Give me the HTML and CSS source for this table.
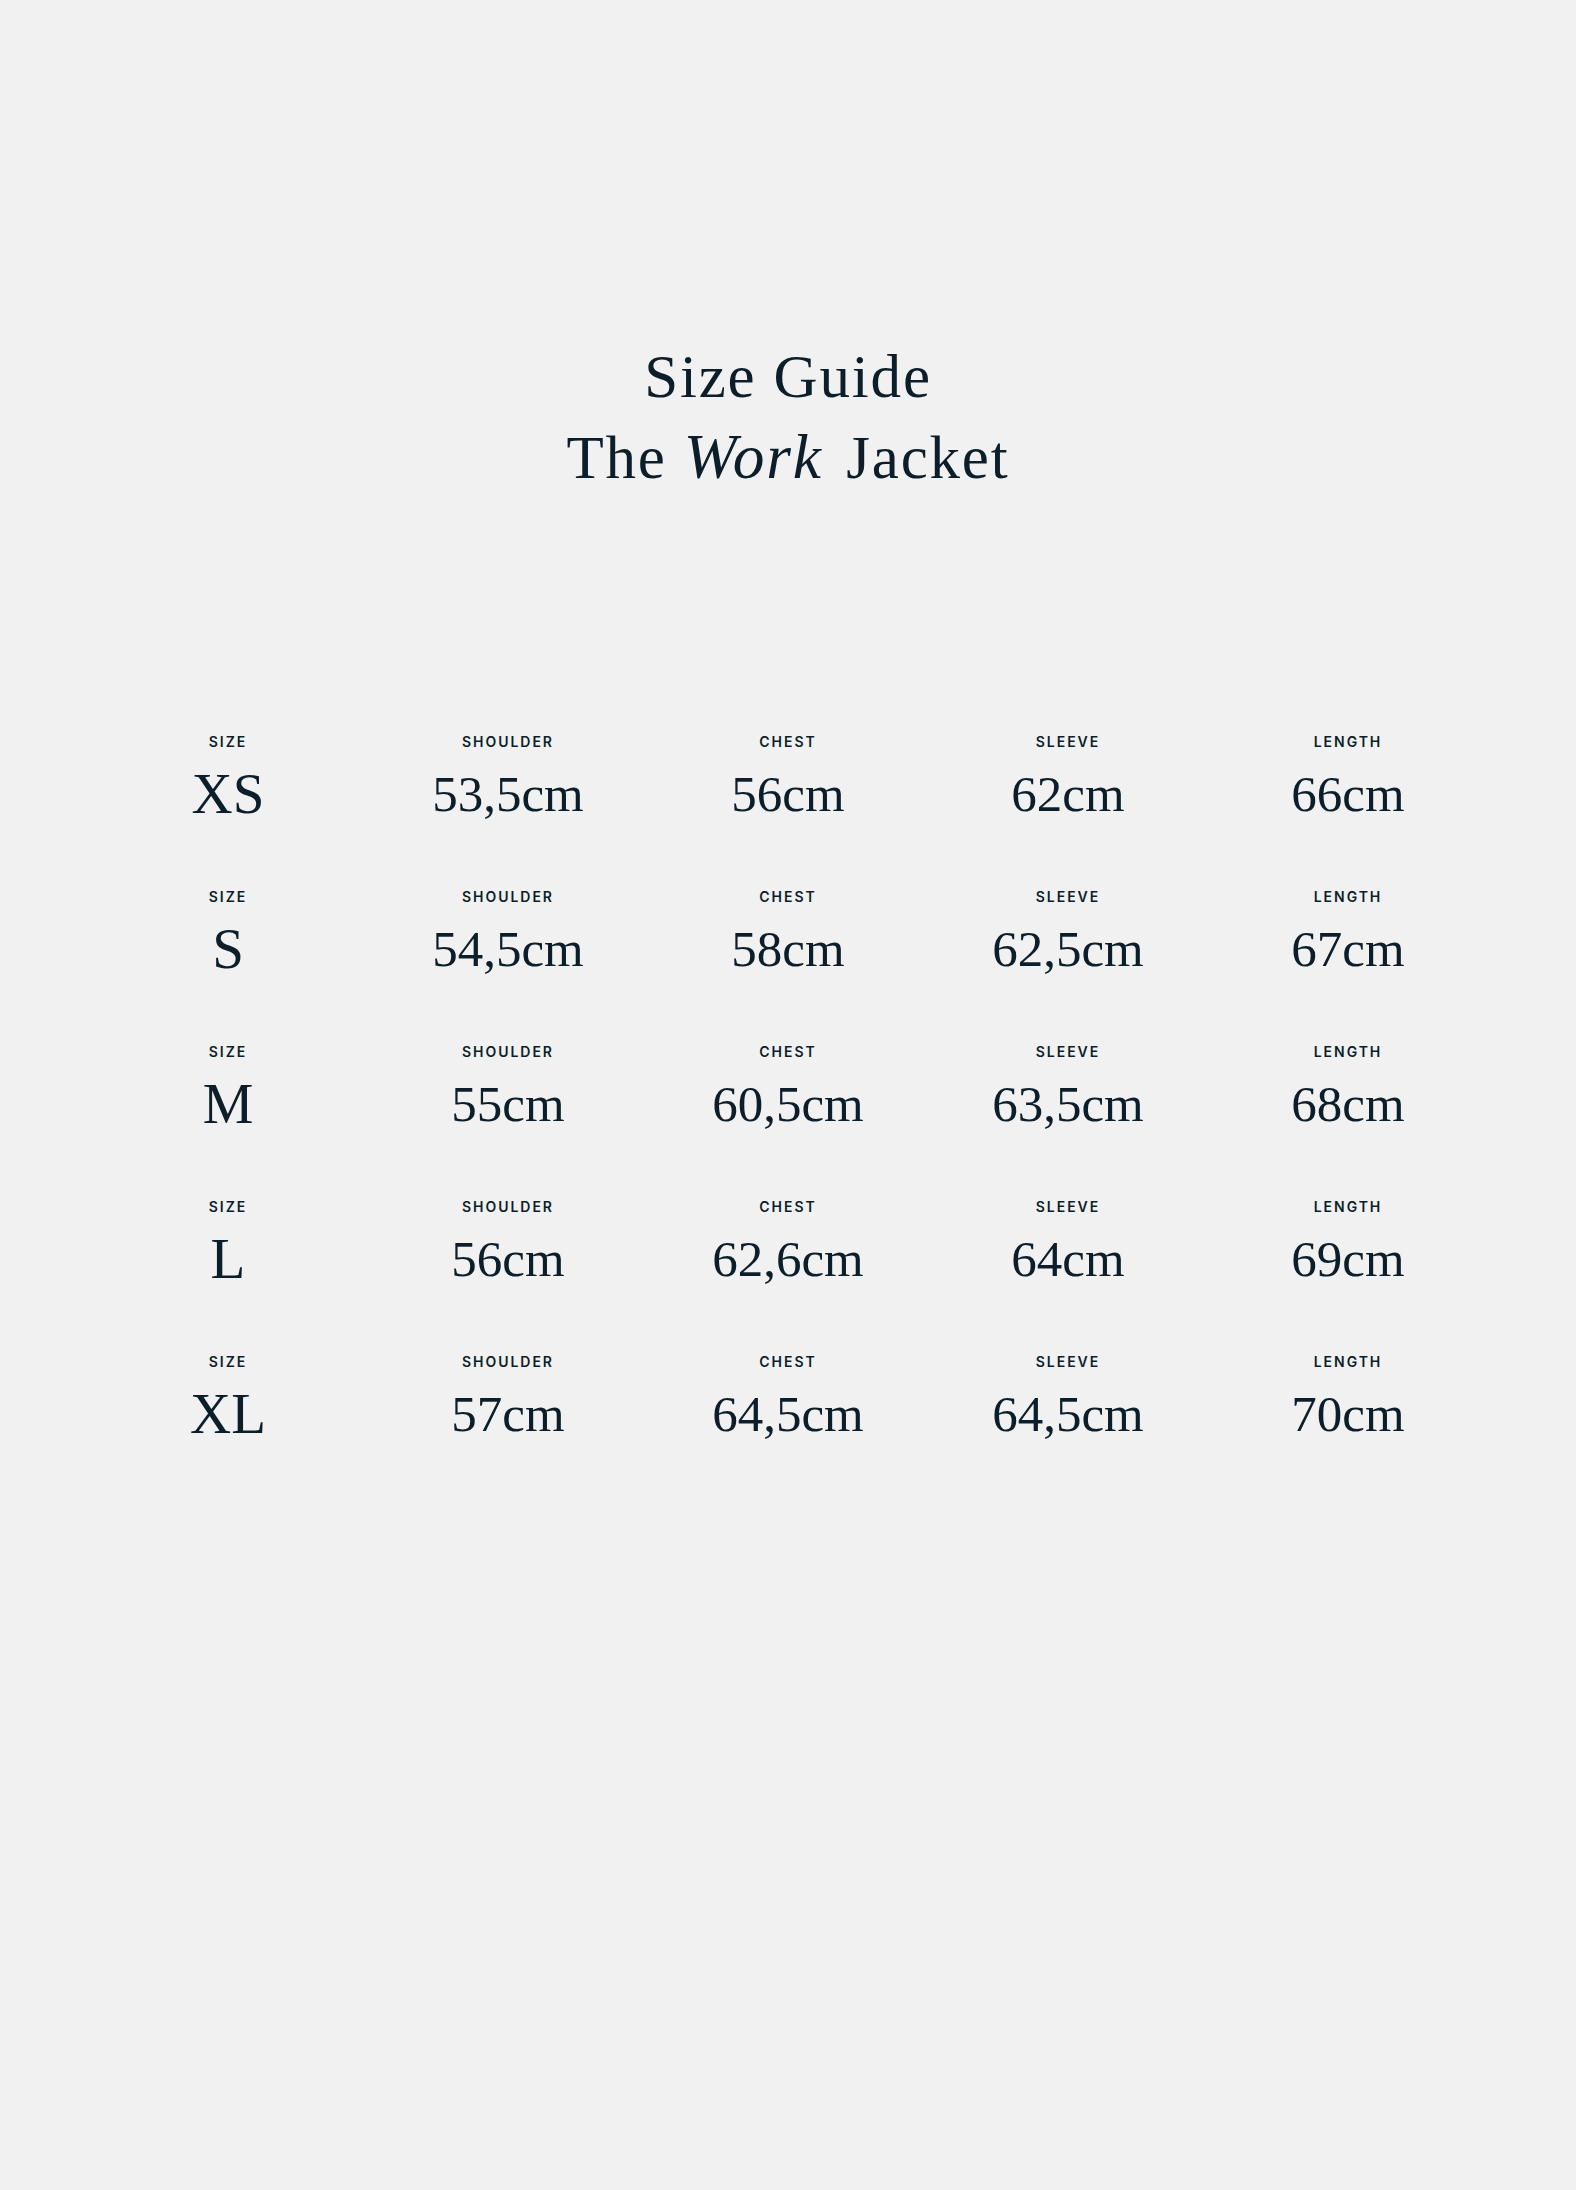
FILE: index.html
```html
<!DOCTYPE html>
<html lang="en">
<head>
<meta charset="utf-8">
<title>Size Guide – The Work Jacket</title>
<link rel="stylesheet" href="styles.css">
</head>
<body>
<main class="page">
  <header class="title">
    <h1 class="title-line">Size Guide</h1>
    <p class="title-line">The <em>Work</em> Jacket</p>
  </header>
  <section class="table">
    <div class="row">
      <div class="cell"><span class="label">Size</span><span class="value value-size">XS</span></div>
      <div class="cell"><span class="label">Shoulder</span><span class="value">53,5cm</span></div>
      <div class="cell"><span class="label">Chest</span><span class="value">56cm</span></div>
      <div class="cell"><span class="label">Sleeve</span><span class="value">62cm</span></div>
      <div class="cell"><span class="label">Length</span><span class="value">66cm</span></div>
    </div>
    <div class="row">
      <div class="cell"><span class="label">Size</span><span class="value value-size">S</span></div>
      <div class="cell"><span class="label">Shoulder</span><span class="value">54,5cm</span></div>
      <div class="cell"><span class="label">Chest</span><span class="value">58cm</span></div>
      <div class="cell"><span class="label">Sleeve</span><span class="value">62,5cm</span></div>
      <div class="cell"><span class="label">Length</span><span class="value">67cm</span></div>
    </div>
    <div class="row">
      <div class="cell"><span class="label">Size</span><span class="value value-size">M</span></div>
      <div class="cell"><span class="label">Shoulder</span><span class="value">55cm</span></div>
      <div class="cell"><span class="label">Chest</span><span class="value">60,5cm</span></div>
      <div class="cell"><span class="label">Sleeve</span><span class="value">63,5cm</span></div>
      <div class="cell"><span class="label">Length</span><span class="value">68cm</span></div>
    </div>
    <div class="row">
      <div class="cell"><span class="label">Size</span><span class="value value-size">L</span></div>
      <div class="cell"><span class="label">Shoulder</span><span class="value">56cm</span></div>
      <div class="cell"><span class="label">Chest</span><span class="value">62,6cm</span></div>
      <div class="cell"><span class="label">Sleeve</span><span class="value">64cm</span></div>
      <div class="cell"><span class="label">Length</span><span class="value">69cm</span></div>
    </div>
    <div class="row">
      <div class="cell"><span class="label">Size</span><span class="value value-size">XL</span></div>
      <div class="cell"><span class="label">Shoulder</span><span class="value">57cm</span></div>
      <div class="cell"><span class="label">Chest</span><span class="value">64,5cm</span></div>
      <div class="cell"><span class="label">Sleeve</span><span class="value">64,5cm</span></div>
      <div class="cell"><span class="label">Length</span><span class="value">70cm</span></div>
    </div>
  </section>
</main>
</body>
</html>
```

FILE: styles.css
```css
html, body {
  margin: 0;
  padding: 0;
  background: #f1f1f1;
}

body {
  color: #0b1e2a;
  font-family: "Liberation Serif", "Times New Roman", serif;
  min-height: 2190px;
}

.page {
  padding-top: 337px;
  display: flex;
  flex-direction: column;
  align-items: center;
}

.title {
  text-align: center;
}

.title-line {
  margin: 0;
  font-size: 61px;
  line-height: 80px;
  font-weight: 400;
  letter-spacing: 0.03em;
}

.title-line em {
  font-style: italic;
  font-size: 1.04em;
  padding-right: 0.1em;
}

.table {
  margin-top: 236px;
  width: 1400px;
  display: flex;
  flex-direction: column;
  gap: 65px;
}

.row {
  display: grid;
  grid-template-columns: repeat(5, 1fr);
}

.cell {
  display: flex;
  flex-direction: column;
  align-items: center;
  gap: 14px;
}

.label {
  font-family: "Inter", "DejaVu Sans", sans-serif;
  font-size: 14px;
  line-height: 16px;
  font-weight: 600;
  letter-spacing: 0.14em;
  text-transform: uppercase;
}

.value {
  font-size: 51px;
  line-height: 60px;
  font-weight: 400;
}

.value-size {
  font-size: 57px;
}
```
